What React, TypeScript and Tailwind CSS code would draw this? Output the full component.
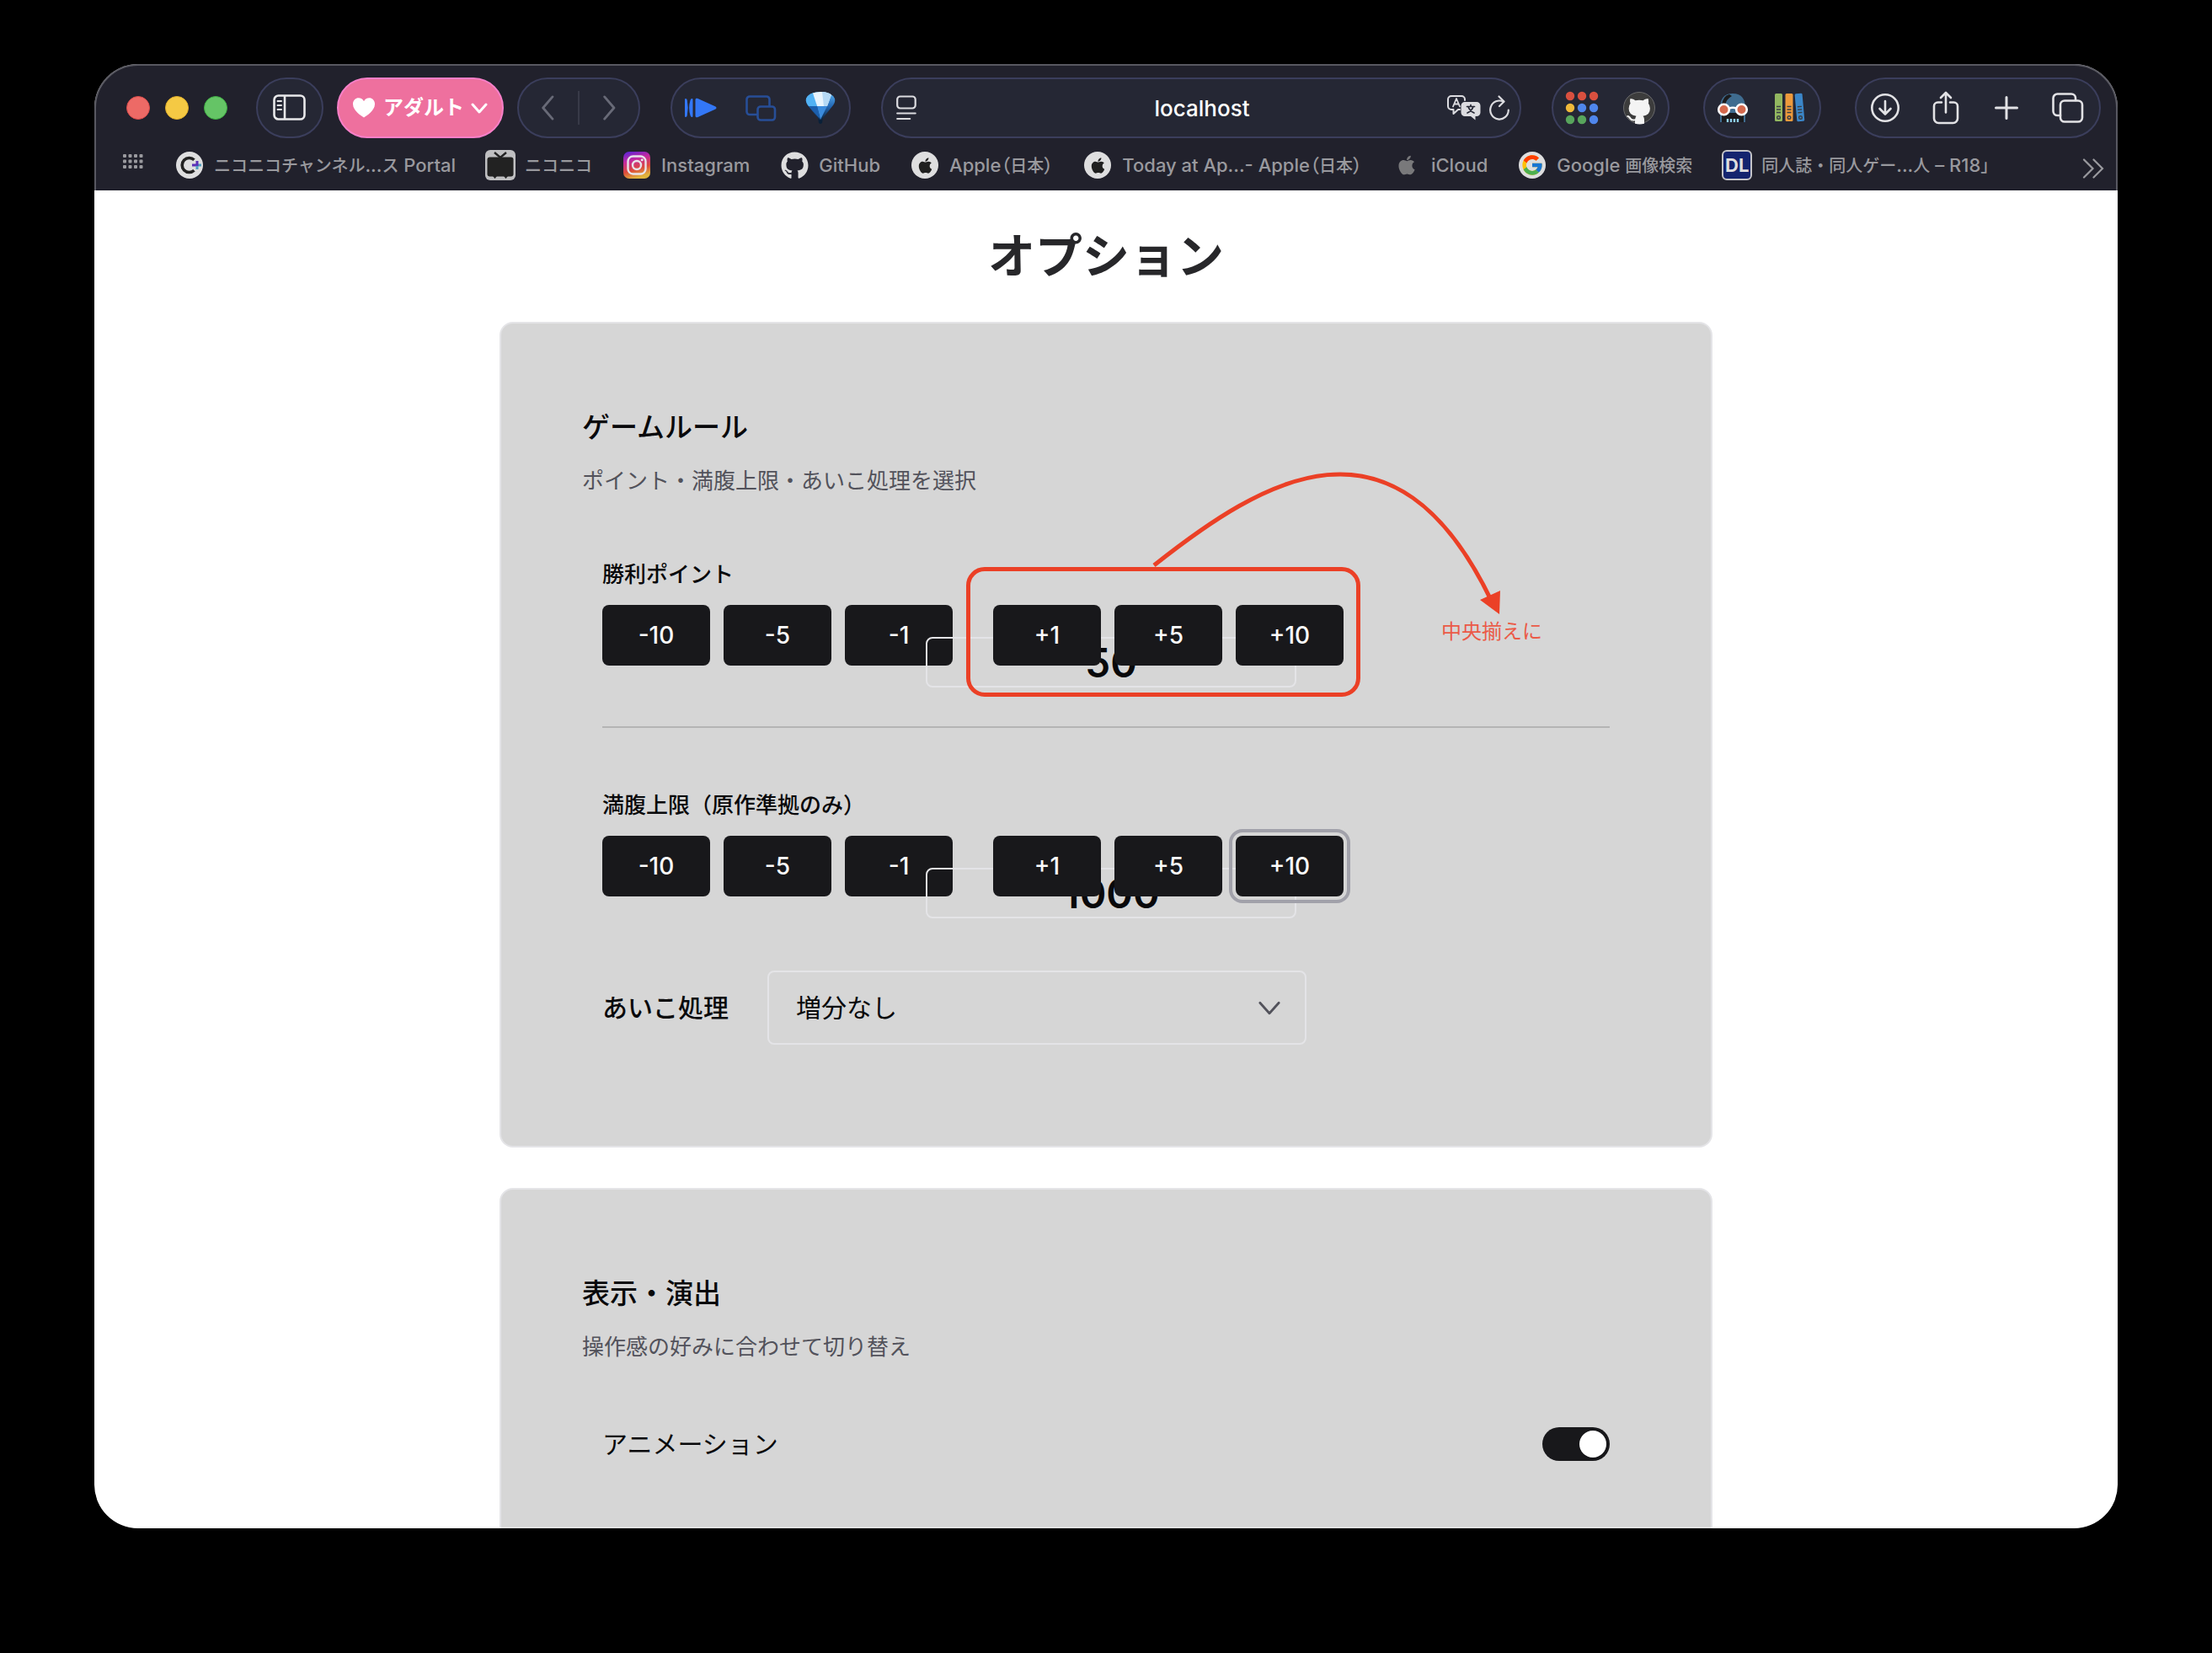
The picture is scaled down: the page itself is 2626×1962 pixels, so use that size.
import React, { useState } from "react";
import { FaApple, FaGithub } from "react-icons/fa";
import { FcGoogle } from "react-icons/fc";

const uiFont = "font-['Inter','Noto_Sans_CJK_JP',sans-serif]";

const pill =
  "flex h-[72px] shrink-0 items-center rounded-full border-2 border-[#3b3e5c] bg-[#252734]";

/* ---------- Toolbar icons ---------- */

function SidebarIcon() {
  return (
    <svg width="40" height="32" viewBox="0 0 40 32" fill="none" stroke="#e8e8ea" strokeWidth="2.6">
      <rect x="1.5" y="1.5" width="36" height="28" rx="5" />
      <path d="M14 2v27" />
      <path d="M5.5 8h4.5M5.5 13h4.5M5.5 18h4.5" strokeWidth="2" strokeLinecap="round" />
    </svg>
  );
}

function HeartIcon() {
  return (
    <svg width="26" height="24" viewBox="0 0 26 24" fill="#fff">
      <path d="M13 23.5C10 21.5 0 15.500 0 7.500 0 3 3.200.3 6.700.3 9.500.3 11.800 1.900 13 4.200 14.200 1.900 16.500.3 19.300.3 22.800.3 26 3 26 7.500c0 8-10 14-13 16z" />
    </svg>
  );
}

function Chevron({ dir, size, color, width }: { dir: "left" | "right" | "down"; size: number; color: string; width: number }) {
  const d = { left: "M17 2 5 16l12 14", right: "M5 2l12 14L5 30", down: "M2 3l8 9 8-9" }[dir];
  const box = dir === "down" ? "0 0 20 15" : "0 0 22 32";
  const w = dir === "down" ? size : (size * 22) / 32;
  const h = dir === "down" ? (size * 15) / 20 : size;
  return (
    <svg width={w} height={h} viewBox={box} fill="none" stroke={color} strokeWidth={width} strokeLinecap="round" strokeLinejoin="round">
      <path d={d} />
    </svg>
  );
}

function PlayIcon() {
  return (
    <svg width="38" height="24" viewBox="0 0 38 24" fill="#3377f6">
      <path d="M0 2Q0 1 1 1 2.500 1 2.800 3 4.600 12 2.800 21 2.500 23 1 23 0 23 0 22z" />
      <path d="M9.500 2Q9.500 1 8.500 1 7 1 6.500 3 3.800 12 6.500 21 7 23 8.500 23 9.500 23 9.500 22z" />
      <path d="M12.500 2.500c0-1.700 1.500-2.200 3-1.500L36 10.200c2 1 2 2.600 0 3.600L15.500 23c-1.500.7-3 .2-3-1.500z" />
    </svg>
  );
}

function WindowsIcon() {
  return (
    <svg width="37" height="31" viewBox="0 0 37 31" fill="none" stroke="#274e97" strokeWidth="2.600">
      <path d="M14 23H5a3.500 3.500 0 0 1-3.500-3.500V5A3.500 3.500 0 0 1 5 1.500h20A3.500 3.500 0 0 1 28.500 5v8" />
      <rect x="14.500" y="13.500" width="20.500" height="16" rx="3.500" />
    </svg>
  );
}

function GemIcon() {
  return (
    <svg width="36" height="40" viewBox="0 0 36 40">
      <defs>
        <linearGradient id="gem" x1="0" y1="0" x2="0" y2="1">
          <stop offset="0" stopColor="#5bb4f2" />
          <stop offset=".45" stopColor="#2468b4" />
          <stop offset=".9" stopColor="#0a2038" />
        </linearGradient>
      </defs>
      <path d="M1 9Q5 1 18 1t17 8q1 4-2 8L21 32l-1 6q-2 2-4 0l-1-6L3 17Q0 13 1 9z" fill="url(#gem)" />
      <path d="M1 9q2-5 9-7l4 16H4Q0 13 1 9z" fill="#52b2f4" />
      <path d="M9 2.500Q13 1 18 1q8 0 13 3.500L26 18H14z" fill="#e8f4fd" />
      <path d="M20 1q7 0 11 3.500L26 18h-4z" fill="#b5d9f5" />
      <path d="M14 18h12l-8 16z" fill="#3b8bdc" />
      <path d="M4 18h10l4 16z" fill="#1c5fae" />
    </svg>
  );
}

function ReaderIcon() {
  return (
    <svg width="24" height="30" viewBox="0 0 24 30" fill="none" stroke="#dcdce0" strokeWidth="2.200" strokeLinecap="round">
      <rect x="1.200" y="1.500" width="21.500" height="14" rx="3.500" />
      <path d="M1.200 21.500h21.500M1.200 28h15" />
    </svg>
  );
}

function TranslateIcon() {
  return (
    <svg width="40" height="30" viewBox="0 0 40 30" fill="none" strokeLinecap="round" strokeLinejoin="round">
      <path d="M15 17h-2l-5.500 5v-5H5a4 4 0 0 1-4-4V5a4 4 0 0 1 4-4h12a4 4 0 0 1 4 4v1" stroke="#dcdce0" strokeWidth="2" />
      <path d="M7 13.500 11 4l4 9.500M8.500 10.500h5" stroke="#dcdce0" strokeWidth="1.800" />
      <path d="M21 8h14a4.500 4.500 0 0 1 4.500 4.500v8A4.500 4.500 0 0 1 35 25h-1.500v4.500L28 25h-7a4.500 4.500 0 0 1-4.500-4.500v-8A4.500 4.500 0 0 1 21 8z" fill="#dcdce0" />
      <path d="M23.500 13.500h9M28 11.500v2M31 13.500q-1.500 5-7 7.500M25 13.500q1.500 5 7 7.500" stroke="#252734" strokeWidth="1.700" />
    </svg>
  );
}

function ReloadIcon() {
  return (
    <svg width="24" height="30" viewBox="0 0 24 30" fill="none" stroke="#dcdce0" strokeWidth="2.200" strokeLinecap="round" strokeLinejoin="round">
      <path d="M22.800 17.500A10.800 11 0 1 1 17 7.800" />
      <path d="M11.500 1.500 17.500 7.500 12 13" />
    </svg>
  );
}

function AppsIcon() {
  const colors = ["#d9503f", "#d9503f", "#d9503f", "#f0b93a", "#4f86ec", "#4f86ec", "#58a55c", "#58a55c", "#4f86ec"];
  return (
    <svg width="40" height="40" viewBox="0 0 40 40">
      {colors.map((c, i) => (
        <circle key={i} cx={6 + (i % 3) * 14} cy={6 + Math.floor(i / 3) * 14} r="5.200" fill={c} />
      ))}
    </svg>
  );
}

function OctocatIcon() {
  return (
    <svg width="40" height="40" viewBox="0 0 40 40">
      <circle cx="20" cy="20" r="18.500" fill="#3c3c3c" stroke="#6a6a6c" />
      <path
        d="M9.500 9q4 .3 6 2.300 4.500-1 9 0 2-2 6-2.300 1 3 .4 5.700 2 2.300 2 6 0 8-8.400 9 1.500 1.500 1.500 4v5q-5.500 1.500-11 0v-3.500q-4.500 1-6.500-2-1.500-2.500-3.500-3 .5-1.500 2.500-1 2 1 3 3 1.500 2 4.700 1 .2-2 1.300-3.500-8.900-1-8.900-9 0-3.700 2-6Q8.500 12 9.500 9z"
        fill="#f4f4f4"
      />
    </svg>
  );
}

function GogglesIcon() {
  return (
    <svg width="38" height="36" viewBox="0 0 38 36">
      <path d="M4 21Q3 1 19 1t15 20v14H4z" fill="#3f6c8f" />
      <path d="M6 15Q7 4 15 2l3 2Q11 8 10 15z" fill="#1b1b1d" />
      <path d="M6 24h26v11H6z" fill="#1b1b1d" />
      <circle cx="8.500" cy="20" r="6.300" fill="#d4694d" stroke="#fff" strokeWidth="2.600" />
      <circle cx="29.500" cy="20" r="6.300" fill="#d4694d" stroke="#fff" strokeWidth="2.600" />
      <path d="M15 18.500q4-1.500 8 0" fill="none" stroke="#fff" strokeWidth="2.600" />
      <path d="M13 31v4M17 31v4M21 31v4M25 31v4" stroke="#8fd0f0" strokeWidth="2.400" />
    </svg>
  );
}

function Book({ x, color }: { x: number; color: string }) {
  return (
    <g transform={`translate(${x} 1)`}>
      <rect width="9" height="33" rx="1.500" fill={color} />
      <path d="M2 15.500h5M2 19h5M2 22.500h5" stroke="#3a3f45" strokeWidth="1.300" />
      <circle cx="4.500" cy="28.500" r="1.800" fill="none" stroke="#3a3f45" strokeWidth="1.400" />
    </g>
  );
}

function BooksIcon() {
  return (
    <svg width="38" height="36" viewBox="0 0 38 36">
      <Book x={1} color="#92b760" />
      <Book x={13.5} color="#ee9a3c" />
      <g transform="rotate(-5 31 18)">
        <Book x={26} color="#3b86c8" />
      </g>
    </svg>
  );
}

const actionIcon = { fill: "none", stroke: "#e2e2e5", strokeWidth: 2.6, strokeLinecap: "round", strokeLinejoin: "round" } as const;

function DownloadIcon() {
  return (
    <svg width="36" height="36" viewBox="0 0 36 36" {...actionIcon}>
      <circle cx="18" cy="18" r="15.700" />
      <path d="M18 10v15M11.500 19l6.500 6.500 6.500-6.500" />
    </svg>
  );
}

function ShareIcon() {
  return (
    <svg width="32" height="40" viewBox="0 0 32 40" {...actionIcon}>
      <path d="M11 13.500H6.500A4.500 4.500 0 0 0 2 18v14.500A5.500 5.500 0 0 0 7.500 38h17a5.500 5.500 0 0 0 5.500-5.500V18a4.500 4.500 0 0 0-4.500-4.500H21" />
      <path d="M16 25.500V2M10 8l6-6 6 6" />
    </svg>
  );
}

function PlusIcon() {
  return (
    <svg width="34" height="28" viewBox="-4 0 34 28" {...actionIcon} strokeWidth={3}>
      <path d="M14 1.500v25M1.500 14h25" />
    </svg>
  );
}

function TabsIcon() {
  return (
    <svg width="38" height="36" viewBox="0 0 38 36" {...actionIcon}>
      <path d="M10 27H6.500A5 5 0 0 1 1.500 22V6.500a5 5 0 0 1 5-5H23a5 5 0 0 1 5 5V9" />
      <rect x="10" y="9.500" width="26" height="25" rx="5" />
    </svg>
  );
}

/* ---------- Bookmark icons ---------- */

function ChannelPlusIcon() {
  return (
    <svg width="32" height="32" viewBox="0 0 32 32">
      <circle cx="16" cy="16" r="16" fill="#dededf" />
      <path d="M21.500 9.800a8.500 8.500 0 1 0 0 12.400" fill="none" stroke="#222" strokeWidth="3.600" />
      <path d="M19 16h6" stroke="#5b2fb8" strokeWidth="3" />
      <path d="M25 16h5M25 16v5" stroke="#4f9fc0" strokeWidth="3" />
      <path d="M25 11v6" stroke="#5b2fb8" strokeWidth="3" />
    </svg>
  );
}

function NiconicoIcon() {
  return (
    <svg width="36" height="36" viewBox="0 0 36 36">
      <rect width="36" height="36" rx="6" fill="#bfbfc1" />
      <path d="M11 3l7 6 7-6" fill="none" stroke="#222" strokeWidth="2.400" />
      <rect x="2.500" y="8.500" width="31" height="23" rx="3" fill="#222" />
      <path d="M9 31h5l-2.500 3zM22 31h5l-2.500 3z" fill="#222" />
    </svg>
  );
}

function InstagramIcon() {
  return (
    <svg width="32" height="32" viewBox="0 0 32 32">
      <defs>
        <linearGradient id="ig" x1=".1" y1="0" x2=".4" y2="1">
          <stop offset="0" stopColor="#5a24d8" />
          <stop offset=".35" stopColor="#c42aa0" />
          <stop offset=".7" stopColor="#dc4a3c" />
          <stop offset="1" stopColor="#e0b43c" />
        </linearGradient>
      </defs>
      <rect width="32" height="32" rx="7" fill="url(#ig)" />
      <rect x="5.500" y="5.500" width="21" height="21" rx="6" fill="none" stroke="#e8e4ea" strokeWidth="2.400" />
      <circle cx="16" cy="16" r="5" fill="none" stroke="#e8e4ea" strokeWidth="2.400" />
      <circle cx="22.200" cy="9.800" r="1.500" fill="#e8e4ea" />
    </svg>
  );
}

const appleBadge = (
  <span className="flex size-8 items-center justify-center rounded-full bg-[#dededf]">
    <FaApple size={21} color="#1f1f1f" />
  </span>
);

const bookmarks: { label: string; icon: React.ReactNode }[] = [
  { label: "ニコニコチャンネル...ス Portal", icon: <ChannelPlusIcon /> },
  { label: "ニコニコ", icon: <NiconicoIcon /> },
  { label: "Instagram", icon: <InstagramIcon /> },
  { label: "GitHub", icon: <FaGithub size={33} color="#dededf" /> },
  { label: "Apple（日本）", icon: appleBadge },
  { label: "Today at Ap...- Apple（日本）", icon: appleBadge },
  { label: "iCloud", icon: <FaApple size={26} color="#79797b" /> },
  {
    label: "Google 画像検索",
    icon: (
      <span className="flex size-8 items-center justify-center rounded-full bg-[#dededf]">
        <FcGoogle size={28} />
      </span>
    ),
  },
  {
    label: "同人誌・同人ゲー...人 – R18」",
    icon: (
      <span className="flex size-9 items-center justify-center rounded-md border-2 border-[#c4c4c8] bg-[#14246f] text-[22px] font-bold leading-none text-[#dededf]">
        DL
      </span>
    ),
  },
];

/* Sets Japanese runs slightly smaller than Latin ones; brackets stay proportional. */
function MixedText({ text }: { text: string }) {
  return (
    <span>
      {text.split(/([\u3000-\u9fff]+|[（）]+)/).map((run, i) => {
        if (/^[（）]/.test(run)) return <span key={i} className="[font-feature-settings:'palt']">{run}</span>;
        if (/^[\u3000-\u9fff]/.test(run)) return <span key={i} className="text-[20px]">{run}</span>;
        return run;
      })}
    </span>
  );
}

function BrowserChrome() {
  return (
    <header className="shrink-0 bg-[#21212c]">
      <div className="flex h-[90px] items-center pt-[14px] pr-5 pl-[38px]">
        <div className="flex shrink-0 gap-[18px]">
          <button aria-label="閉じる" className="size-7 rounded-full border border-[#d94c4c] bg-[#ed6a66]" />
          <button aria-label="しまう" className="size-7 rounded-full border border-[#dfae2a] bg-[#f5c944]" />
          <button aria-label="拡大" className="size-7 rounded-full border border-[#3fae44] bg-[#65c466]" />
        </div>
        <button aria-label="サイドバー" className={`${pill} ml-[34px] w-20 justify-center`}>
          <SidebarIcon />
        </button>
        <button className="ml-4 flex h-[72px] w-[198px] shrink-0 items-center justify-center rounded-full border-2 border-[#f77fc8] bg-[#ee709e] text-2xl font-bold text-white">
          <HeartIcon />
          <span className="mr-2 ml-[10px]">アダルト</span>
          <Chevron dir="down" size={20} color="#fff" width={3} />
        </button>
        <div className={`${pill} ml-4 w-[146px] justify-between px-6`}>
          <button aria-label="戻る">
            <Chevron dir="left" size={30} color="#686a77" width={3} />
          </button>
          <span className="h-10 w-[2px] bg-[#383a48]" />
          <button aria-label="進む">
            <Chevron dir="right" size={30} color="#686a77" width={3} />
          </button>
        </div>
        <div className={`${pill} ml-9 w-[214px] justify-between pr-4 pl-[15px]`}>
          <button aria-label="再生">
            <PlayIcon />
          </button>
          <button aria-label="ウインドウ">
            <WindowsIcon />
          </button>
          <button aria-label="ジェム">
            <GemIcon />
          </button>
        </div>
        <div className={`${pill} ml-9 min-w-0 flex-1 shrink pr-3 pl-4`}>
          <button aria-label="ページメニュー">
            <ReaderIcon />
          </button>
          <input
            aria-label="アドレス"
            defaultValue="localhost"
            className="min-w-0 flex-1 bg-transparent pl-12 text-center text-[26px] font-medium text-white outline-none"
          />
          <button aria-label="翻訳">
            <TranslateIcon />
          </button>
          <button aria-label="再読み込み" className="ml-[10px]">
            <ReloadIcon />
          </button>
        </div>
        <div className={`${pill} ml-9 w-[140px] justify-between px-[14px]`}>
          <button aria-label="アプリ">
            <AppsIcon />
          </button>
          <button aria-label="GitHub 拡張機能">
            <OctocatIcon />
          </button>
        </div>
        <div className={`${pill} ml-10 w-[140px] justify-between pr-4 pl-[14px]`}>
          <button aria-label="ゴーグル">
            <GogglesIcon />
          </button>
          <button aria-label="ライブラリ">
            <BooksIcon />
          </button>
        </div>
        <div className={`${pill} ml-10 w-[292px] justify-between pr-[18px] pl-4`}>
          <button aria-label="ダウンロード">
            <DownloadIcon />
          </button>
          <button aria-label="共有">
            <ShareIcon />
          </button>
          <button aria-label="新規タブ">
            <PlusIcon />
          </button>
          <button aria-label="タブ一覧">
            <TabsIcon />
          </button>
        </div>
      </div>

      <nav aria-label="お気に入り" className="flex h-[60px] items-center pr-4 pl-[34px]">
        <button aria-label="お気に入り一覧" className="mr-9 pb-2">
          <svg width="25" height="18" viewBox="0 0 25 18" fill="#99999e">
            {[0, 1, 2].map((r) => [0, 1, 2, 3].map((c) => <rect key={`${r}${c}`} x={c * 6.5} y={r * 6.5} width="4" height="4" rx="1" />))}
          </svg>
        </button>
        <div className="flex min-w-0 flex-1 items-center gap-[35px]">
          {bookmarks.map((b) => (
            <a key={b.label} href="#" className="flex shrink-0 items-center gap-[11px] text-[22px] leading-8 font-medium text-[#99999e]">
              <span className="flex w-9 justify-center">{b.icon}</span>
              <MixedText text={b.label} />
            </a>
          ))}
        </div>
        <button aria-label="さらに表示" className="pt-2">
          <svg width="26" height="24" viewBox="0 0 26 24" fill="none" stroke="#99999e" strokeWidth="2.200" strokeLinecap="round">
            <path d="M2 1.500 12.500 12 2 22.500M13.500 1.500 24 12 13.500 22.500" />
          </svg>
        </button>
      </nav>
    </header>
  );
}

/* ---------- Page content ---------- */

function StepButton({ label, onClick, focused = false }: { label: string; onClick: () => void; focused?: boolean }) {
  return (
    <button
      onClick={onClick}
      className={`h-[72px] w-32 rounded-lg bg-[#18181b] text-[28px] font-medium text-[#fafafa] ${
        focused ? "outline-4 outline-offset-4 outline-[#a1a1aa]" : ""
      }`}
    >
      {label}
    </button>
  );
}

function Stepper({ id, label, initial, focusedStep }: { id: string; label: string; initial: number; focusedStep?: number }) {
  const [value, setValue] = useState(initial);
  const step = (n: number) => (
    <StepButton key={n} label={n > 0 ? `+${n}` : `${n}`} focused={n === focusedStep} onClick={() => setValue(value + n)} />
  );
  return (
    <div className="flex flex-col gap-4">
      <label htmlFor={id} className="text-[26px] leading-10 font-medium">
        {label}
      </label>
      <div className="relative flex gap-12">
        <div className="flex gap-4">{[-10, -5, -1].map(step)}</div>
        <input
          id={id}
          value={value}
          onChange={(e) => setValue(Number(e.target.value) || 0)}
          className="absolute top-[38px] left-96 h-[60px] w-[440px] rounded-lg border-2 border-[#e4e4e7] bg-transparent text-center text-5xl font-semibold text-[#09090b] outline-none"
        />
        <div className="relative flex gap-4">{[1, 5, 10].map(step)}</div>
      </div>
    </div>
  );
}

function Card({ title, description, children }: { title: string; description: string; children: React.ReactNode }) {
  return (
    <section className="relative rounded-2xl border-2 border-[#e4e4e7] bg-[#d6d6d6] p-24 text-[#09090b]">
      <h2 className="text-[33px] leading-[54px] font-medium">{title}</h2>
      <p className="mt-4 text-[26px] leading-[42px] text-[#52525b]">{description}</p>
      {children}
    </section>
  );
}

/* Review note drawn over the first stepper. */
function Annotation() {
  return (
    <div className="pointer-events-none absolute inset-0">
      <div className="absolute top-[289px] left-[552px] h-[154px] w-[468px] rounded-[22px] border-[5px] border-[#eb4026]" />
      <svg className="absolute top-[166px] left-[765px]" width="430" height="190" viewBox="1360 550 430 190" fill="none">
        <path d="M1370 671C1500 568 1655 474 1770 712" stroke="#eb4026" strokeWidth="5" />
        <path d="M1780 729 1757 712 1781 701z" fill="#eb4026" />
      </svg>
      <p className="absolute top-[346px] left-[1116px] text-2xl leading-10 text-[#eb5a46]">中央揃えに</p>
    </div>
  );
}

export default function App() {
  const [animation, setAnimation] = useState(true);
  return (
    <div className={`flex h-screen flex-col bg-black px-[112px] pt-[76px] pb-[148px] ${uiFont}`}>
      <div className="relative flex min-h-0 flex-1 flex-col overflow-hidden rounded-[52px] bg-white">
        <BrowserChrome />
        <main className="min-h-0 flex-1 overflow-hidden pt-12">
          <h1 className="text-center text-[56px] leading-[60px] font-bold text-[#27272a]">オプション</h1>
          <div className="mx-auto mt-12 flex max-w-[1440px] flex-col gap-12">
            <Card title="ゲームルール" description="ポイント・満腹上限・あいこ処理を選択">
              <div className="mt-[70px] px-6 pb-6">
                <Stepper id="win-point" label="勝利ポイント" initial={50} />
                <hr className="my-[72px] border-t-2 border-[#b4b4b4]" />
                <Stepper id="full-limit" label="満腹上限（原作準拠のみ）" initial={1000} focusedStep={10} />
                <div className="mt-[88px] flex items-center gap-[46px]">
                  <label htmlFor="draw-rule" className="text-[30px] leading-10 font-medium">
                    あいこ処理
                  </label>
                  <div className="relative w-[640px]">
                    <select
                      id="draw-rule"
                      className="h-[88px] w-full appearance-none rounded-lg border-2 border-[#e4e4e7] bg-transparent px-8 text-[30px] outline-none"
                    >
                      <option>増分なし</option>
                    </select>
                    <span className="pointer-events-none absolute inset-y-0 right-[30px] flex items-center">
                      <Chevron dir="down" size={28} color="#52525b" width={2} />
                    </span>
                  </div>
                </div>
              </div>
              <Annotation />
            </Card>
            <Card title="表示・演出" description="操作感の好みに合わせて切り替え">
              <div className="mt-[74px] flex items-center justify-between px-6 pb-6">
                <label htmlFor="animation" className="text-[30px] leading-10">
                  アニメーション
                </label>
                <button
                  id="animation"
                  role="switch"
                  aria-checked={animation}
                  onClick={() => setAnimation(!animation)}
                  className={`flex h-10 w-20 items-center rounded-full bg-[#18181b] px-1 ${animation ? "justify-end" : "justify-start"}`}
                >
                  <span className="size-8 rounded-full bg-white shadow" />
                </button>
              </div>
            </Card>
          </div>
        </main>
        <div className="pointer-events-none absolute inset-0 rounded-[52px] border-2 border-white/25" />
      </div>
    </div>
  );
}
